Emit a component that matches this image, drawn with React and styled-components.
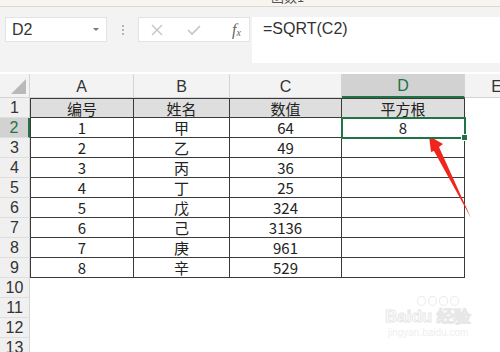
import React from "react";
import styled, { createGlobalStyle } from "styled-components";

const GlobalStyle = createGlobalStyle`
  html, body {
    margin: 0;
    padding: 0;
    background: #ffffff;
    overflow: hidden;
  }
  body {
    font-family: "Noto Sans CJK SC", "Liberation Sans", sans-serif;
  }
`;

const cols = ["A", "B", "C", "D"];
const rows = [
  ["编号", "姓名", "数值", "平方根"],
  ["1", "甲", "64", "8"],
  ["2", "乙", "49", ""],
  ["3", "丙", "36", ""],
  ["4", "丁", "25", ""],
  ["5", "戊", "324", ""],
  ["6", "己", "3136", ""],
  ["7", "庚", "961", ""],
  ["8", "辛", "529", ""],
];
const emptyRows = [10, 11, 12, 13];

const App = () => (
  <Page>
    <GlobalStyle />
    <TitleStrip>
      <TitleText>函数1</TitleText>
    </TitleStrip>

    <Toolbar>
      <NameBox>
        <span>D2</span>
        <Caret />
      </NameBox>
      <Grip>
        <i />
        <i />
        <i />
      </Grip>
      <FxBox>
        <svg width="14" height="14" viewBox="0 0 14 14">
          <path d="M2 2 L12 12 M12 2 L2 12" stroke="#c4c4c4" strokeWidth="1.4" fill="none" />
        </svg>
        <svg width="16" height="14" viewBox="0 0 16 14">
          <path d="M2 7 L6 11 L14 3" stroke="#c4c4c4" strokeWidth="1.6" fill="none" />
        </svg>
        <FxLabel>
          f<sub>x</sub>
        </FxLabel>
      </FxBox>
      <FormulaInput>=SQRT(C2)</FormulaInput>
    </Toolbar>

    <Sheet>
      <Corner>
        <svg width="15" height="15" viewBox="0 0 15 15">
          <polygon points="15,0 15,15 0,15" fill="#b9b9b9" />
        </svg>
      </Corner>
      {cols.map((c) => (
        <ColHead key={c} $active={c === "D"}>
          {c}
        </ColHead>
      ))}
      <ColHead>E</ColHead>

      {rows.map((r, i) => (
        <React.Fragment key={i}>
          <RowHead $active={i === 1}>{i + 1}</RowHead>
          {r.map((v, j) => (
            <Cell
              key={j}
              $head={i === 0}
              $first={j === 0}
              $top={i === 0}
              $selected={i === 1 && j === 3}
            >
              {v}
            </Cell>
          ))}
          <Blank />
        </React.Fragment>
      ))}

      {emptyRows.map((n) => (
        <React.Fragment key={n}>
          <RowHead>{n}</RowHead>
          <Blank />
          <Blank />
          <Blank />
          <Blank />
          <Blank />
        </React.Fragment>
      ))}
    </Sheet>

    <Arrow width="50" height="90" viewBox="0 0 50 90">
      <polygon points="0,0 14,8 10,11 42,82 5,15 2,16" fill="#f0261e" />
    </Arrow>

    <Watermark>
      <Paw>
        <i />
        <i />
        <i />
        <i />
      </Paw>
      <Brand>Baidu 经验</Brand>
      <Url>jingyan.baidu.com</Url>
    </Watermark>
  </Page>
);

const Page = styled.div`
  position: relative;
  width: 500px;
  height: 352px;
  overflow: hidden;
  background: #ffffff;
`;

const TitleStrip = styled.div`
  height: 6px;
  background: #f8f4f0;
  border-bottom: 1px solid #ddd8d3;
  overflow: hidden;
  display: flex;
  justify-content: center;
  padding-left: 75px;
`;

const TitleText = styled.div`
  font-size: 13px;
  line-height: 13px;
  margin-top: -10px;
  color: #555;
`;

const Toolbar = styled.div`
  height: 65px;
  box-sizing: border-box;
  background: #f3f3f3;
  display: flex;
  align-items: flex-start;
  padding: 10px 0 0 5px;
`;

const NameBox = styled.div`
  width: 102px;
  height: 25px;
  box-sizing: border-box;
  background: #fff;
  border: 1px solid #e3e3e3;
  display: flex;
  align-items: center;
  justify-content: space-between;
  padding: 0 7px 0 6px;
  font-family: "Liberation Sans", sans-serif;
  font-size: 16px;
  color: #333;
`;

const Caret = styled.span`
  width: 0;
  height: 0;
  border-left: 3px solid transparent;
  border-right: 3px solid transparent;
  border-top: 3px solid #777;
`;

const Grip = styled.div`
  width: 31px;
  height: 25px;
  display: flex;
  flex-direction: column;
  align-items: center;
  justify-content: center;
  gap: 2px;
  i {
    width: 2px;
    height: 2px;
    background: #b5b5b5;
  }
`;

const FxBox = styled.div`
  width: 112px;
  height: 25px;
  box-sizing: border-box;
  background: #fff;
  border: 1px solid #e3e3e3;
  display: flex;
  align-items: center;
  padding: 0 8px 0 11px;
  gap: 22px;
`;

const FxLabel = styled.span`
  margin-left: auto;
  font-family: "Liberation Serif", serif;
  font-style: italic;
  font-size: 16px;
  color: #666;
  sub {
    font-size: 10px;
    vertical-align: -1px;
  }
`;

const FormulaInput = styled.div`
  flex: 1;
  margin-left: 2px;
  height: 46px;
  box-sizing: border-box;
  background: #fff;
  padding: 3px 0 0 11px;
  font-family: "Liberation Sans", sans-serif;
  font-size: 16px;
  color: #333;
`;

const Sheet = styled.div`
  margin-top: 2px;
  display: grid;
  grid-template-columns: 30px 104px 96px 112px 123px 64px;
  grid-template-rows: 24px repeat(13, 20px);
  font-size: 15px;
  color: #222;
`;

const Corner = styled.div`
  background: #f3f3f3;
  border-right: 1px solid #d4d4d4;
  border-bottom: 1px solid #d4d4d4;
  display: flex;
  align-items: flex-end;
  justify-content: flex-end;
  padding: 0 3px 3px 0;
`;

const ColHead = styled.div`
  background: ${(p) => (p.$active ? "#d2d2d2" : "#f3f3f3")};
  color: ${(p) => (p.$active ? "#217346" : "#333")};
  border-right: 1px solid #d4d4d4;
  border-bottom: ${(p) => (p.$active ? "2px solid #217346" : "1px solid #d4d4d4")};
  box-sizing: border-box;
  display: flex;
  align-items: center;
  justify-content: center;
  font-family: "Liberation Sans", sans-serif;
  font-size: 16px;
  padding-top: 2px;
`;

const RowHead = styled.div`
  background: ${(p) => (p.$active ? "#d2d2d2" : "#f0f0f0")};
  color: ${(p) => (p.$active ? "#217346" : "#333")};
  border-right: ${(p) => (p.$active ? "2px solid #217346" : "1px solid #d4d4d4")};
  border-bottom: 1px solid #dedede;
  box-sizing: border-box;
  display: flex;
  align-items: center;
  justify-content: center;
  font-family: "Liberation Sans", sans-serif;
  font-size: 16px;
`;

const Cell = styled.div`
  position: relative;
  box-sizing: border-box;
  background: ${(p) => (p.$head ? "#dedede" : "#fff")};
  border-right: 1px solid #3a3a3a;
  border-bottom: 1px solid #3a3a3a;
  border-left: ${(p) => (p.$first ? "1px solid #3a3a3a" : "none")};
  border-top: ${(p) => (p.$top ? "1px solid #3a3a3a" : "none")};
  display: flex;
  align-items: center;
  justify-content: center;
  line-height: 1;
  ${(p) =>
    p.$selected &&
    `
    outline: 2px solid #217346;
    outline-offset: -1px;
    z-index: 1;
    &::after {
      content: "";
      position: absolute;
      right: -4px;
      bottom: -4px;
      width: 5px;
      height: 5px;
      background: #217346;
      border: 1px solid #fff;
    }
  `}
`;

const Blank = styled.div`
  background: #fff;
`;

const Arrow = styled.svg`
  position: absolute;
  left: 429px;
  top: 136px;
`;

const Watermark = styled.div`
  position: absolute;
  left: 382px;
  top: 296px;
  width: 92px;
  display: flex;
  flex-direction: column;
  align-items: center;
  opacity: 0.8;
`;

const Paw = styled.div`
  display: flex;
  gap: 2px;
  height: 12px;
  margin-left: 20px;
  i {
    width: 7px;
    height: 8px;
    border: 1px solid #e6e6e6;
    border-radius: 50%;
  }
`;

const Brand = styled.div`
  font-family: "Liberation Sans", sans-serif;
  font-size: 17px;
  font-weight: bold;
  line-height: 18px;
  color: #fff;
  -webkit-text-stroke: 1px #e2e2e2;
`;

const Url = styled.div`
  font-family: "Liberation Sans", sans-serif;
  font-size: 10px;
  line-height: 14px;
  color: #ececec;
`;

export default App;
